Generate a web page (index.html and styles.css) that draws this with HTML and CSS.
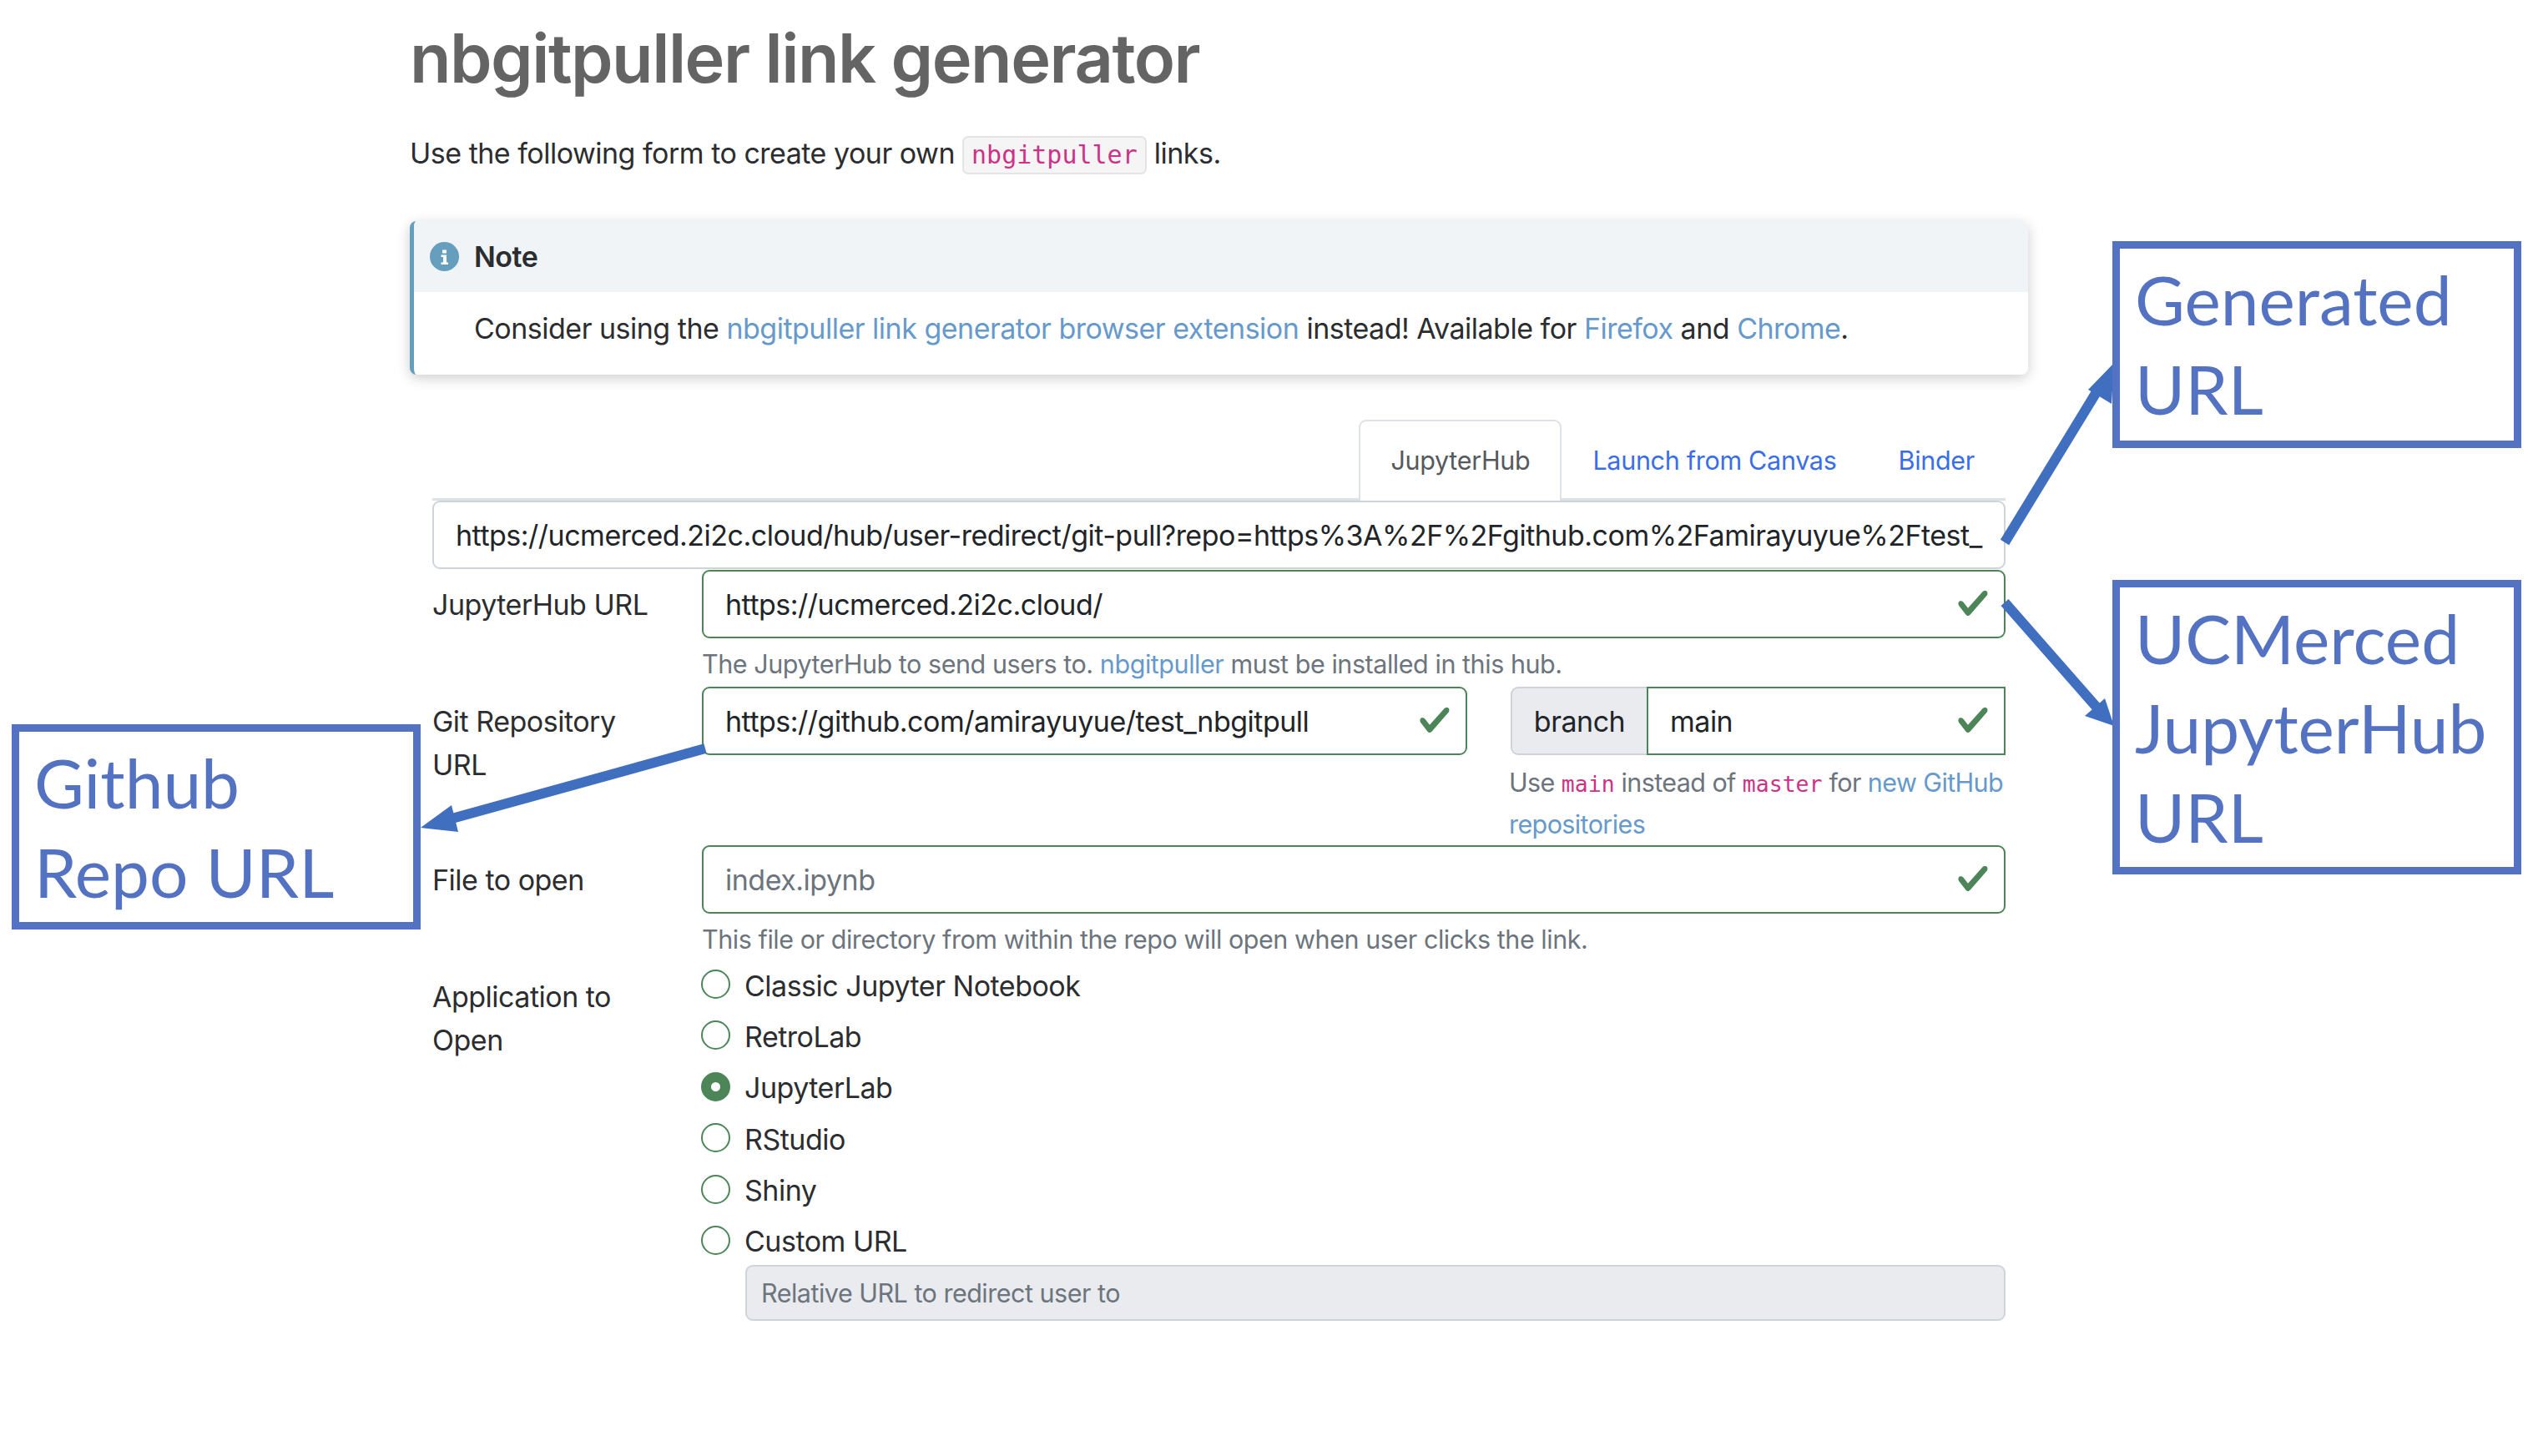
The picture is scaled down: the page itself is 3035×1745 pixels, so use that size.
FILE: index.html
```html
<!DOCTYPE html>
<html lang="en">
<head>
  <meta charset="UTF-8">
  <title>nbgitpuller link generator</title>
  <link rel="stylesheet" href="styles.css">
</head>
<body>

  <svg width="0" height="0" class="defs">
    <symbol id="check" viewBox="0 0 8 8">
      <path d="M2.3 6.73.6 4.53c-.4-1.04.46-1.4 1.1-.8l1.1 1.4 3.4-3.8c.6-.63 1.6-.27 1.2.7l-4 4.6c-.43.5-.8.4-1.1.1z"/>
    </symbol>
  </svg>

  <main class="page">
    <h1>nbgitpuller link generator</h1>
    <p class="intro">Use the following form to create your own <code class="chip">nbgitpuller</code> links.</p>

    <div class="note">
      <div class="note-title">
        <svg class="note-icon" viewBox="0 0 35 35">
          <circle cx="17.5" cy="17.5" r="17.5"/>
          <path d="M15 9.500h5v4h-5zM13.500 15.500h6.500v9h2v2.500h-8.500v-2.500h2.500v-6.500h-2.500z"/>
        </svg>
        Note
      </div>
      <p class="note-body">Consider using the <a href="#">nbgitpuller link generator browser extension</a> instead! Available for <a href="#">Firefox</a> and <a href="#">Chrome</a>.</p>
    </div>

    <form class="gen-form">
      <div class="tabs">
        <a class="tab active" href="#">JupyterHub</a>
        <a class="tab" href="#">Launch from Canvas</a>
        <a class="tab" href="#">Binder</a>
      </div>

      <div class="field">https://ucmerced.2i2c.cloud/hub/user-redirect/git-pull?repo=https%3A%2F%2Fgithub.com%2Famirayuyue%2Ftest_</div>

      <div class="row row-first">
        <label class="row-label">JupyterHub URL</label>
        <div class="row-body">
          <div class="field valid">https://ucmerced.2i2c.cloud/<svg class="tick"><use href="#check"/></svg></div>
          <div class="hint">The JupyterHub to send users to. <a href="#">nbgitpuller</a> must be installed in this hub.</div>
        </div>
      </div>

      <div class="row">
        <label class="row-label">Git Repository URL</label>
        <div class="row-body split">
          <div class="field valid repo">https://github.com/amirayuyue/test_nbgitpull<svg class="tick"><use href="#check"/></svg></div>
          <div class="branch-col">
            <div class="input-group">
              <span class="addon">branch</span>
              <div class="field valid branch">main<svg class="tick"><use href="#check"/></svg></div>
            </div>
            <div class="hint hint-branch">Use <code>main</code> instead of <code>master</code> for <a href="#">new GitHub</a> <a href="#">repositories</a></div>
          </div>
        </div>
      </div>

      <div class="row row-file">
        <label class="row-label">File to open</label>
        <div class="row-body">
          <div class="field valid placeholder">index.ipynb<svg class="tick"><use href="#check"/></svg></div>
          <div class="hint">This file or directory from within the repo will open when user clicks the link.</div>
        </div>
      </div>

      <div class="row">
        <label class="row-label">Application to Open</label>
        <div class="row-body radios">
          <label class="radio"><input type="radio" name="app"> Classic Jupyter Notebook</label>
          <label class="radio"><input type="radio" name="app"> RetroLab</label>
          <label class="radio"><input type="radio" name="app" checked> JupyterLab</label>
          <label class="radio"><input type="radio" name="app"> RStudio</label>
          <label class="radio"><input type="radio" name="app"> Shiny</label>
          <label class="radio"><input type="radio" name="app"> Custom URL</label>
          <div class="field disabled">Relative URL to redirect user to</div>
        </div>
      </div>
    </form>
  </main>

  <!-- annotations drawn over the screenshot -->
  <svg class="arrows" viewBox="0 0 3035 1745">
    <path d="M2402 650 2518 460M2402 722 2516 852M845 897 538 982"/>
    <polygon points="2533,435 2530,484 2502,467"/>
    <polygon points="2533,870 2498,858 2522,837"/>
    <polygon points="504,992 541,965 549,997"/>
  </svg>
  <div class="callout call-generated">Generated URL</div>
  <div class="callout call-hub">UCMerced JupyterHub URL</div>
  <div class="callout call-repo">Github Repo URL</div>

</body>
</html>
```

FILE: styles.css
```css
* {
  box-sizing: border-box;
}
html, body {
  margin: 0;
  background: #fff;
}
body {
  position: relative;
  width: 3035px;
  height: 1745px;
  overflow: hidden;
  font-family: Inter, "Noto Sans", sans-serif;
  font-size: 34px;
  letter-spacing: -0.5px;
  line-height: 52px;
  color: #2b2d30;
}
a {
  color: #6699cc;
  text-decoration: none;
}
code {
  font-family: "DejaVu Sans Mono", monospace;
  font-size: 26.5px;
  letter-spacing: 0;
  line-height: 1;
  color: #cc3388;
}
.defs {
  position: absolute;
}

.page {
  width: 1939px;
  margin-left: 491px;
}
h1 {
  margin: 0;
  padding-top: 24px;
  font-size: 81px;
  line-height: 92px;
  font-weight: 600;
  letter-spacing: -1.5px;
  color: #646464;
}
.intro {
  height: 52px;
  margin: 42px 0 0;
}
.chip {
  display: inline-block;
  padding: 0 9px;
  line-height: 42px;
  background: #f5f5f5;
  border: 2px solid #e4e4e4;
  border-radius: 7px;
  font-size: 30px;
}

.note {
  margin-top: 55px;
  height: 184px;
  background: #fff;
  border-left: 5px solid #659fbd;
  border-radius: 8px;
  box-shadow: 0 4px 16px rgba(0, 0, 0, 0.2);
  overflow: hidden;
}
.note-title {
  display: flex;
  align-items: center;
  gap: 18px;
  height: 85px;
  padding-left: 19px;
  background: #f0f4f7;
  font-weight: 600;
}
.note-icon {
  width: 35px;
  height: 35px;
  fill: #659fbd;
}
.note-icon path {
  fill: #fff;
}
.note-body {
  margin: 0;
  padding: 18px 0 0 72px;
}

.gen-form {
  width: 1885px;
  margin: 54px 0 0 27px;
}
.tabs {
  display: flex;
  justify-content: flex-end;
  height: 97px;
  border-bottom: 3px solid #dee2e6;
  font-size: 30.500px;
  letter-spacing: -0.3px;
}
.tab {
  height: 97px;
  padding: 24px 37px 0;
  line-height: 50px;
  color: #3a6ee8;
}
.tab.active {
  padding: 22px 36px 0;
  border: 2px solid #dee2e6;
  border-bottom: 0;
  border-radius: 9px 9px 0 0;
  background: #fff;
  color: #55595e;
}

.field {
  position: relative;
  height: 82px;
  padding: 0 26px;
  line-height: 79px;
  white-space: nowrap;
  overflow: hidden;
  border: 2px solid #ced4da;
  border-radius: 9px;
  color: #212529;
}
.field.valid {
  border-color: #4c8658;
}
.field.placeholder {
  color: #6c757d;
}
.field.disabled {
  height: 67px;
  margin: 1px 0 0 52px;
  padding: 0 17px;
  line-height: 63px;
  font-size: 30.500px;
  background: #e9ebef;
  color: #6c757d;
}
.tick {
  position: absolute;
  top: 18px;
  right: 17px;
  width: 40px;
  height: 40px;
  fill: #4c8658;
}

.row {
  display: flex;
  margin-top: 2px;
}
.row-first {
  margin-top: 1px;
}
.row-file {
  margin-top: 0;
}
.row-label {
  flex: 0 0 323px;
  width: 323px;
  padding: 16px 40px 0 0;
}
.row-body {
  flex: 1;
  min-width: 0;
}
.radios {
  padding-top: 2px;
}
.hint {
  margin-top: 6px;
  font-size: 30.500px;
  letter-spacing: -0.45px;
  line-height: 50px;
  color: #6c757d;
}

.split {
  display: flex;
  gap: 52px;
}
.repo {
  flex: 0 0 917px;
}
.branch-col {
  flex: 1;
  min-width: 0;
}
.input-group {
  display: flex;
}
.addon {
  flex: 0 0 163px;
  height: 82px;
  line-height: 79px;
  text-align: center;
  background: #e9ebef;
  border: 2px solid #ced4da;
  border-right: 0;
  border-radius: 9px 0 0 9px;
  color: #212529;
}
.branch {
  flex: 1;
  border-radius: 0;
}
.hint-branch {
  margin: 8px -2px 0 -2px;
  letter-spacing: -0.6px;
}
.hint-branch a {
  white-space: nowrap;
}

.radio {
  display: flex;
  align-items: center;
  height: 53px;
  margin-bottom: 8.400px;
  gap: 17px;
}
.radio:last-of-type {
  margin-bottom: 0;
}
.radio input {
  appearance: none;
  flex: 0 0 35px;
  width: 35px;
  height: 35px;
  margin: -4px 0 0 -1px;
  background: #fff;
  border: 2px solid #4c8658;
  border-radius: 50%;
}
.radio input:checked {
  border-width: 12px;
}

.arrows {
  position: absolute;
  left: 0;
  top: 0;
  width: 3035px;
  height: 1745px;
  pointer-events: none;
}
.arrows path {
  fill: none;
  stroke: #416fbf;
  stroke-width: 12;
}
.arrows polygon {
  fill: #416fbf;
}

.callout {
  position: absolute;
  width: 490px;
  padding: 7px 18px;
  border: 9px solid #5472c2;
  font-family: Lato, "Open Sans", sans-serif;
  font-size: 82px;
  line-height: 107px;
  letter-spacing: 0;
  color: #5472c2;
  background: #fff;
}
.call-generated {
  left: 2531px;
  top: 289px;
  height: 248px;
}
.call-hub {
  left: 2531px;
  top: 695px;
  height: 353px;
}
.call-repo {
  left: 14px;
  top: 868px;
  height: 246px;
}
```
